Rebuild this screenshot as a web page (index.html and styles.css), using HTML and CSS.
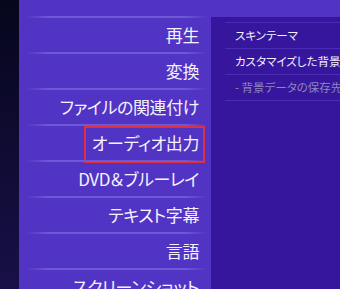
FILE: index.html
```html
<!DOCTYPE html>
<html lang="ja">
<head>
<meta charset="utf-8">
<link rel="stylesheet" href="styles.css">
</head>
<body>
<div class="screen">
  <div class="strip"></div>
  <div class="main">
    <ul class="menu">
      <li class="item">再生</li>
      <li class="item">変換</li>
      <li class="item">ファイルの関連付け</li>
      <li class="item marked">オーディオ出力</li>
      <li class="item">DVD＆ブルーレイ</li>
      <li class="item">テキスト字幕</li>
      <li class="item">言語</li>
      <li class="item">スクリーンショット</li>
    </ul>
    <div class="panel">
      <div class="row">スキンテーマ</div>
      <div class="row">カスタマイズした背景を使用</div>
      <div class="row dim">- 背景データの保存先</div>
    </div>
  </div>
</div>
</body>
</html>
```
FILE: styles.css
```css
html, body {
  margin: 0;
  padding: 0;
}
body {
  width: 340px;
  height: 289px;
  overflow: hidden;
  font-family: "Noto Sans CJK JP", "Noto Sans", sans-serif;
}
.screen {
  display: flex;
  width: 340px;
  height: 289px;
}
.strip {
  width: 19px;
  flex: none;
  background: linear-gradient(#06061c, #181048);
}
.main {
  flex: 1;
  display: flex;
  background: #5234c4;
  padding-top: 17px;
  overflow: hidden;
}
.menu {
  list-style: none;
  margin: 0;
  padding: 0;
  width: 192px;
  flex: none;
}
.item {
  position: relative;
  height: 36px;
  line-height: 35px;
  text-align: right;
  padding-right: 12px;
  font-size: 17px;
  font-feature-settings: "palt";
  letter-spacing: -0.4px;
  color: #f4f2ff;
  white-space: nowrap;
}
.item::before {
  content: "";
  position: absolute;
  left: 7px;
  right: 4px;
  top: -1px;
  height: 2px;
  background: linear-gradient(90deg, rgba(130,110,225,0), #6e58d6 12%, #6e58d6 88%, rgba(130,110,225,0));
}
.marked::after {
  content: "";
  position: absolute;
  left: 65px;
  right: 6px;
  top: 1px;
  height: 33px;
  border: 2px solid #e0303c;
}
.panel {
  flex: 1;
  min-width: 0;
  background: #36169c;
  padding-top: 5px;
  overflow: hidden;
}
.row {
  height: 25px;
  line-height: 25px;
  margin-left: 14px;
  padding-left: 10px;
  font-size: 11.5px;
  font-feature-settings: "palt";
  color: #f4f2ff;
  white-space: nowrap;
  overflow: hidden;
  border-top: 1px solid #4a2db4;
}
.row.dim {
  color: #8f86c0;
  border-bottom: 1px solid #4a2db4;
}
```
